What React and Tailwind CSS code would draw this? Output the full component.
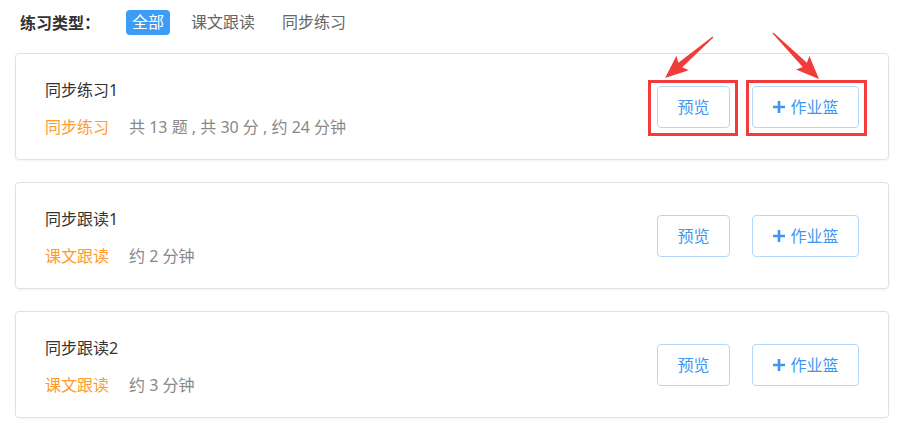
import React from 'react';

const tabs = ['全部', '课文跟读', '同步练习'];

const items = [
  { title: '同步练习1', type: '同步练习', info: '共 13 题 , 共 30 分 , 约 24 分钟', marked: true },
  { title: '同步跟读1', type: '课文跟读', info: '约 2 分钟' },
  { title: '同步跟读2', type: '课文跟读', info: '约 3 分钟' },
];

// 红色标注箭头 (沿 +x 方向画, 再旋转)
const Arrow = ({ x, y, angle, len }) => (
  <g transform={`translate(${x} ${y}) rotate(${angle})`}>
    <polygon
      points={`0,-0.6 ${len - 20},-3 ${len - 23},-9.5 ${len},0 ${len - 23},9.5 ${len - 20},3 0,0.6`}
      fill="#f23b3b"
    />
  </g>
);

const Card = ({ item }) => (
  <div className="h-[107px] flex items-center justify-between px-[29px] bg-white border border-[#e1e1e1] rounded-[4px] shadow-[0_1px_3px_rgba(0,0,0,0.05)]">
    <div className="flex flex-col gap-[15px] pt-[3px]">
      <div className="text-[16px] leading-[22px] text-[#333]">{item.title}</div>
      <div className="flex items-center gap-[20px] text-[16px] leading-[22px]">
        <span className="text-[#ff9a2e]">{item.type}</span>
        <span className="text-[#888]">{item.info}</span>
      </div>
    </div>
    <div className="flex items-center gap-[22px]">
      <div className="relative">
        <button className="w-[73px] h-[42px] border border-[#b3d6fb] rounded-[4px] text-[16px] text-[#3f96f0] bg-white">
          预览
        </button>
        {item.marked && (
          <span className="absolute left-[-9px] right-[-8px] top-[-6px] bottom-[-8px] border-[3px] border-[#f23b3b]" />
        )}
      </div>
      <div className="relative">
        <button className="w-[107px] h-[42px] border border-[#b3d6fb] rounded-[4px] text-[16px] text-[#3f96f0] bg-white flex items-center justify-center gap-[4px]">
          <svg width="14" height="14" viewBox="0 0 14 14">
            <path d="M7 1v12M1 7h12" stroke="#3f96f0" strokeWidth="2.6" />
          </svg>
          <span>作业篮</span>
        </button>
        {item.marked && (
          <span className="absolute left-[-6px] right-[-8px] top-[-6px] bottom-[-8px] border-[3px] border-[#f23b3b]" />
        )}
      </div>
    </div>
  </div>
);

const App = () => {
  return (
    <div
      className="relative w-[904px] h-[433px] bg-white overflow-hidden"
      style={{ fontFamily: '"Noto Sans", "Noto Sans CJK SC", sans-serif' }}
    >
      {/* 练习类型 */}
      <div className="flex items-center h-[25px] mt-[10px] pl-[20px]">
        <span className="text-[16px] font-bold text-[#333] mr-[26px]">练习类型：</span>
        <div className="flex items-center gap-[15px]">
          {tabs.map((t, i) => (
            <span
              key={t}
              className={
                i === 0
                  ? 'h-[25px] leading-[25px] px-[6px] rounded-[4px] bg-[#3c9df6] text-white text-[16px]'
                  : 'h-[25px] leading-[25px] px-[6px] text-[#666] text-[16px]'
              }
            >
              {t}
            </span>
          ))}
        </div>
      </div>

      {/* 列表 */}
      <div className="flex flex-col gap-[22px] mt-[18px] mx-[15px]">
        {items.map((item) => (
          <Card key={item.title} item={item} />
        ))}
      </div>

      {/* 标注箭头 */}
      <svg className="absolute left-0 top-0 pointer-events-none" width="904" height="433">
        <Arrow x={713} y={37} angle={139.5} len={63} />
        <Arrow x={773} y={33} angle={45} len={65} />
      </svg>
    </div>
  );
};

export default App;
